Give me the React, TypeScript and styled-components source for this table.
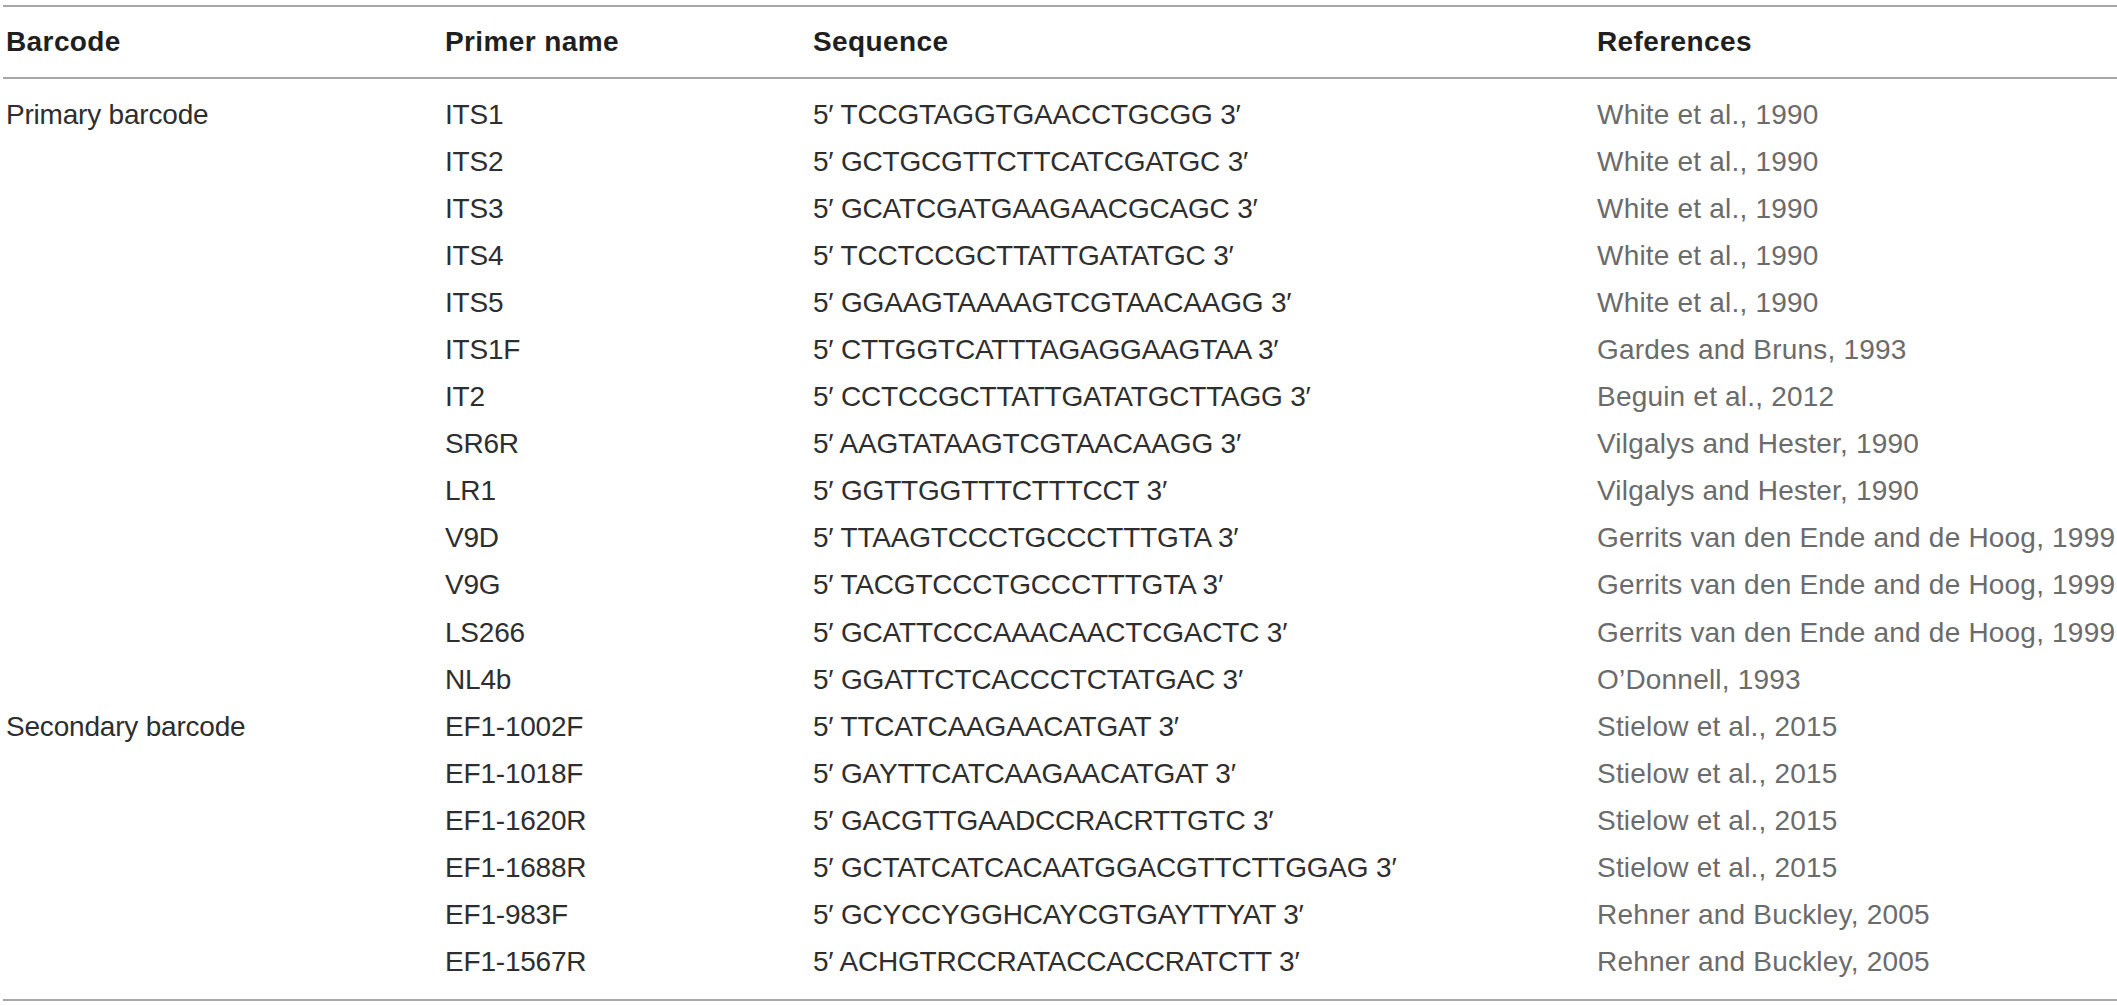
import React from "react";
import styled, { createGlobalStyle } from "styled-components";

const Global = createGlobalStyle`
  html, body { margin: 0; padding: 0; background: #ffffff; }
  body { font-family: "Liberation Sans", Arial, sans-serif; }
`;

const Table = styled.div`
  margin: 5px 0 0 3px;
  width: 2114px;
  border-top: 2px solid #a8a8a8;
  border-bottom: 2px solid #a8a8a8;
`;

const Head = styled.div`
  display: grid;
  grid-template-columns: 439px 368px 784px 1fr;
  height: 70px;
  align-items: center;
  border-bottom: 2px solid #a8a8a8;
  padding-left: 3px;
`;

const HeadCell = styled.div`
  font-size: 28px;
  font-weight: 700;
  color: #1f1f1f;
  letter-spacing: 0.4px;
  white-space: nowrap;
`;

const Body = styled.div`
  padding: 12px 0 13px 3px;
`;

const Row = styled.div`
  display: grid;
  grid-template-columns: 439px 368px 784px 1fr;
  height: 47.1px;
  align-items: center;
`;

const Cell = styled.div<{ $muted?: boolean }>`
  font-size: 28px;
  font-weight: 400;
  color: ${(p) => (p.$muted ? "#6b6b6b" : "#2e2e2e")};
  white-space: nowrap;
  letter-spacing: ${(p) => (p.$muted ? "0.2px" : "-0.2px")};
`;

type R = { group?: string; name: string; seq: string; ref: string };

const rows: R[] = [
  { group: "Primary barcode", name: "ITS1", seq: "TCCGTAGGTGAACCTGCGG", ref: "White et al., 1990" },
  { name: "ITS2", seq: "GCTGCGTTCTTCATCGATGC", ref: "White et al., 1990" },
  { name: "ITS3", seq: "GCATCGATGAAGAACGCAGC", ref: "White et al., 1990" },
  { name: "ITS4", seq: "TCCTCCGCTTATTGATATGC", ref: "White et al., 1990" },
  { name: "ITS5", seq: "GGAAGTAAAAGTCGTAACAAGG", ref: "White et al., 1990" },
  { name: "ITS1F", seq: "CTTGGTCATTTAGAGGAAGTAA", ref: "Gardes and Bruns, 1993" },
  { name: "IT2", seq: "CCTCCGCTTATTGATATGCTTAGG", ref: "Beguin et al., 2012" },
  { name: "SR6R", seq: "AAGTATAAGTCGTAACAAGG", ref: "Vilgalys and Hester, 1990" },
  { name: "LR1", seq: "GGTTGGTTTCTTTCCT", ref: "Vilgalys and Hester, 1990" },
  { name: "V9D", seq: "TTAAGTCCCTGCCCTTTGTA", ref: "Gerrits van den Ende and de Hoog, 1999" },
  { name: "V9G", seq: "TACGTCCCTGCCCTTTGTA", ref: "Gerrits van den Ende and de Hoog, 1999" },
  { name: "LS266", seq: "GCATTCCCAAACAACTCGACTC", ref: "Gerrits van den Ende and de Hoog, 1999" },
  { name: "NL4b", seq: "GGATTCTCACCCTCTATGAC", ref: "O\u2019Donnell, 1993" },
  { group: "Secondary barcode", name: "EF1-1002F", seq: "TTCATCAAGAACATGAT", ref: "Stielow et al., 2015" },
  { name: "EF1-1018F", seq: "GAYTTCATCAAGAACATGAT", ref: "Stielow et al., 2015" },
  { name: "EF1-1620R", seq: "GACGTTGAADCCRACRTTGTC", ref: "Stielow et al., 2015" },
  { name: "EF1-1688R", seq: "GCTATCATCACAATGGACGTTCTTGGAG", ref: "Stielow et al., 2015" },
  { name: "EF1-983F", seq: "GCYCCYGGHCAYCGTGAYTTYAT", ref: "Rehner and Buckley, 2005" },
  { name: "EF1-1567R", seq: "ACHGTRCCRATACCACCRATCTT", ref: "Rehner and Buckley, 2005" },
];

export default function App() {
  return (
    <>
      <Global />
      <Table>
        <Head>
          <HeadCell>Barcode</HeadCell>
          <HeadCell>Primer name</HeadCell>
          <HeadCell>Sequence</HeadCell>
          <HeadCell>References</HeadCell>
        </Head>
        <Body>
          {rows.map((r, i) => (
            <Row key={i}>
              <Cell>{r.group ?? ""}</Cell>
              <Cell>{r.name}</Cell>
              <Cell>{`5\u2032 ${r.seq} 3\u2032`}</Cell>
              <Cell $muted>{r.ref}</Cell>
            </Row>
          ))}
        </Body>
      </Table>
    </>
  );
}
